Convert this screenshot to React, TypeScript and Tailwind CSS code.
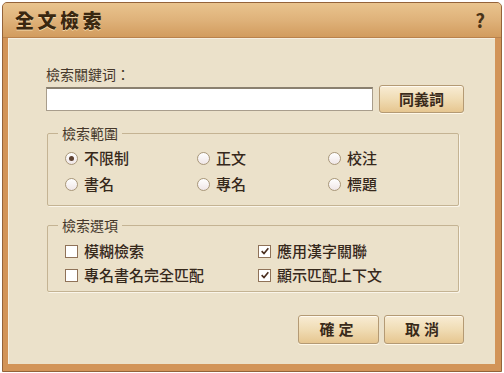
const font = { fontFamily: '"Noto Sans CJK TC", "Noto Sans CJK SC", sans-serif' };

const Radio = ({ label, checked = false }: { label: string; checked?: boolean }) => (
  <label className="flex h-[26px] items-center gap-[6px] text-[15px] font-medium text-[#36281b]">
    <span className="flex size-[13px] items-center justify-center rounded-full border border-[#a8977a] bg-gradient-to-b from-white to-[#efe6e6]">
      {checked && <span className="size-[5px] rounded-full bg-[#5e4232]" />}
    </span>
    {label}
  </label>
);

const Check = ({ label, checked = false }: { label: string; checked?: boolean }) => (
  <label className="flex h-[24px] items-center gap-[6px] text-[15px] font-medium text-[#36281b]">
    <span className="flex size-[13px] items-center justify-center border border-[#8f7258] bg-white">
      {checked && (
        <svg viewBox="0 0 12 12" className="size-[10px]">
          <path d="M2 6.2 L4.8 9 L10 2.8" fill="none" stroke="#4a2e1e" strokeWidth="2" />
        </svg>
      )}
    </span>
    {label}
  </label>
);

const WoodButton = ({ children, className = "" }: { children: React.ReactNode; className?: string }) => (
  <button
    type="button"
    className={`flex items-center justify-center rounded-[3px] border border-[#b49a74] bg-gradient-to-b from-[#f8ecd4] via-[#f0dcb4] to-[#e6c690] text-[15px] font-bold text-[#3a2a1a] shadow-[inset_0_1px_0_#fffaf0,0_1px_0_#fff8e8] ${className}`}
  >
    {children}
  </button>
);

export default function App() {
  return (
    <div className="h-[373px] w-[504px] bg-white pt-[2px] pl-[2px]" style={font}>
      <div className="flex h-[370px] w-[500px] flex-col rounded-t-[5px] border border-[#94633a] bg-[#d29458]">
        <div className="flex h-[35px] items-center justify-between rounded-t-[4px] border-b border-[#b9824c] bg-gradient-to-b from-[#e9c48e] via-[#dfb27a] to-[#d29c5e] pr-[16px] pl-[12px]">
          <h1 className="text-[19px] font-black tracking-[3.5px] text-[#3a2710] [text-shadow:0_1px_0_#f3d7a8]">
            全文檢索
          </h1>
          <span className="text-[19px] font-bold text-[#4a3418]">?</span>
        </div>

        <div className="mr-[6px] mb-[7px] ml-[5px] flex flex-1 flex-col border-t border-l border-[#f6efe0] bg-[#ebe1ca] pt-[27px] pl-[37px]">
          <p className="text-[14px] leading-[16px] text-[#45372a]">檢索關鍵词：</p>

          <div className="mt-[3px] flex h-[28px] w-[418px] items-center gap-[6px]">
            <input
              className="h-[24px] w-[327px] border border-t-2 border-[#a89d8c] border-t-[#8a806f] bg-white outline-none"
              aria-label="檢索關鍵词"
            />
            <WoodButton className="h-[28px] w-[85px]">同義詞</WoodButton>
          </div>

          <fieldset className="mt-[12px] ml-[1px] w-[412px] rounded-[2px] border border-[#c4b393] px-0 pt-[4px] pb-[8px] shadow-[1px_1px_0_#faf5ea]">
            <legend className="ml-[10px] px-[4px] text-[14px] leading-[16px] text-[#45372a]">檢索範圍</legend>
            <div className="grid grid-cols-[132px_131px_1fr] pl-[17px]">
              <Radio label="不限制" checked />
              <Radio label="正文" />
              <Radio label="校注" />
              <Radio label="書名" />
              <Radio label="專名" />
              <Radio label="標題" />
            </div>
          </fieldset>

          <fieldset className="mt-[11px] ml-[1px] w-[412px] rounded-[2px] border border-[#c4b393] px-0 pt-[6px] pb-[4px] shadow-[1px_1px_0_#faf5ea]">
            <legend className="ml-[10px] px-[4px] text-[14px] leading-[16px] text-[#45372a]">檢索選項</legend>
            <div className="grid grid-cols-[193px_1fr] pl-[17px]">
              <Check label="模糊檢索" />
              <Check label="應用漢字關聯" checked />
              <Check label="專名書名完全匹配" />
              <Check label="顯示匹配上下文" checked />
            </div>
          </fieldset>

          <div className="mt-[23px] flex w-[418px] justify-end gap-[5px]">
            <WoodButton className="h-[29px] w-[81px] tracking-[4px]">確定</WoodButton>
            <WoodButton className="h-[29px] w-[80px] tracking-[4px]">取消</WoodButton>
          </div>
        </div>
      </div>
    </div>
  );
}
